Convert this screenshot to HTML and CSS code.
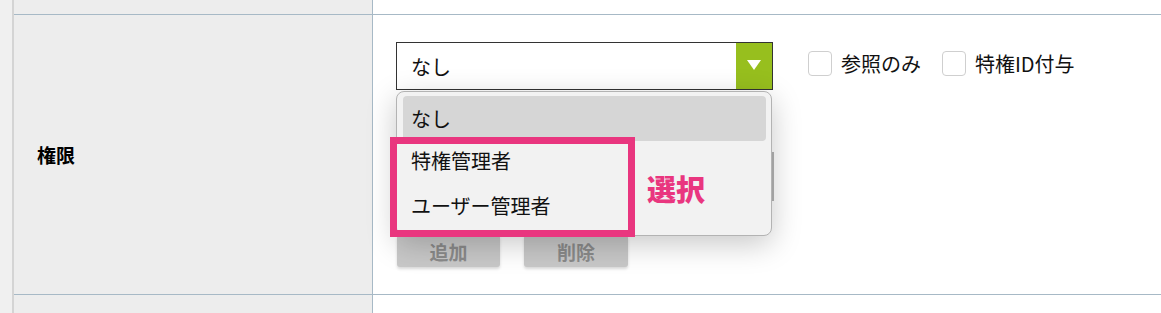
FILE: index.html
```html
<!DOCTYPE html>
<html lang="ja">
<head>
    <meta charset="UTF-8">
    <meta name="viewport" content="width=device-width, initial-scale=1.0">
    <title>権限設定</title>
    <link rel="stylesheet" href="styles.css">
</head>
<body>
    <div class="screen">
        <div class="gutter"></div>

        <div class="form-table">
            <div class="row row-top">
                <div class="label"></div>
                <div class="value"></div>
            </div>

            <!-- 権限 -->
            <div class="row row-main">
                <div class="label">権限</div>
                <div class="value">
                    <div class="controls">
                        <div class="select-wrap">
                            <div class="select">
                                <span class="select-text">なし</span>
                                <span class="select-arrow"></span>
                            </div>
                            <div class="member-list"></div>
                            <div class="buttons">
                                <button class="btn">追加</button>
                                <button class="btn btn-wide">削除</button>
                            </div>

                            <ul class="dropdown">
                                <li class="option option-active">なし</li>
                                <li class="option option-2">特権管理者</li>
                                <li class="option">ユーザー管理者</li>
                            </ul>
                            <div class="callout"></div>
                            <div class="callout-label">選択</div>
                        </div>

                        <div class="checks">
                            <label class="check"><span class="box"></span>参照のみ</label>
                            <label class="check"><span class="box"></span>特権ID付与</label>
                        </div>
                    </div>
                </div>
            </div>

            <div class="row row-bottom">
                <div class="label"></div>
                <div class="value"></div>
            </div>
        </div>
    </div>
</body>
</html>
```

FILE: styles.css
```css
* {
    margin: 0;
    padding: 0;
    box-sizing: border-box;
}

body {
    background-color: #fff;
    font-family: 'Noto Sans CJK JP', 'Noto Sans', sans-serif;
    color: #111;
    height: 313px;
    overflow: hidden;
}

.screen {
    display: flex;
    height: 313px;
}

.gutter {
    width: 14px;
    background-color: #f0f0f0;
    border-right: 2px solid #d4d4d4;
}

.form-table {
    flex: 1;
}

/* 行 */
.row {
    display: grid;
    grid-template-columns: 359px 1fr;
    border-bottom: 1px solid #a7b9c6;
}

.row-top { height: 15px; }
.row-main { height: 280px; }
.row-bottom { height: 18px; border-bottom: none; }

.label {
    background-color: #ededed;
    border-right: 1px solid #a7b9c6;
}

.row-main .label {
    display: flex;
    align-items: center;
    padding-left: 23px;
    font-size: 19px;
    font-weight: bold;
    color: #000;
}

.value {
    background-color: #fff;
}

.row-main .value {
    padding: 27px 0 0 23px;
}

.controls {
    display: flex;
    align-items: flex-start;
}

/* セレクト */
.select-wrap {
    position: relative;
    width: 378px;
}

.select {
    display: flex;
    width: 377px;
    height: 48px;
    border: 1px solid #333;
    background-color: #fff;
}

.select-text {
    flex: 1;
    display: flex;
    align-items: center;
    padding-left: 14px;
    font-size: 20px;
}

.select-arrow {
    width: 36px;
    background-color: #97bf1e;
    display: flex;
    justify-content: center;
    align-items: center;
}

.select-arrow::after {
    content: "";
    border-left: 7px solid transparent;
    border-right: 7px solid transparent;
    border-top: 10px solid #fff;
    margin-top: -2px;
}

.member-list {
    margin-top: 62px;
    height: 49px;
    border-right: 3px solid #b4b4b4;
}

.buttons {
    display: flex;
    gap: 24px;
    margin-top: 34px;
    padding-left: 1px;
}

.btn {
    width: 103px;
    height: 32px;
    border: none;
    border-radius: 3px;
    background-color: #c8c8c8;
    color: #8a8a8a;
    font-family: inherit;
    font-size: 19px;
    font-weight: bold;
    box-shadow: 0 2px 3px rgba(0, 0, 0, 0.15);
}

.btn-wide { width: 104px; }

/* ドロップダウン */
.dropdown {
    position: absolute;
    top: 49px;
    left: 0;
    width: 376px;
    height: 145px;
    list-style: none;
    padding: 4px 5px 0 6px;
    background-color: #f2f2f2;
    border: 1px solid #b3b3b3;
    border-radius: 8px;
    box-shadow: 0 8px 30px rgba(0, 0, 0, 0.22);
    z-index: 5;
}

.option {
    height: 45px;
    line-height: 45px;
    padding-left: 8px;
    font-size: 20px;
    color: #111;
}

.option-active {
    background-color: #d6d6d6;
    border-radius: 4px;
}

.option-2 {
    height: 42px;
    line-height: 40px;
}

/* 注釈 */
.callout {
    position: absolute;
    top: 95px;
    left: -6px;
    width: 245px;
    height: 100px;
    border: 7px solid #e9367f;
    z-index: 6;
}

.callout-label {
    position: absolute;
    top: 132px;
    left: 251px;
    font-size: 29px;
    line-height: 29px;
    font-weight: 900;
    color: #e9367f;
    z-index: 6;
}

/* チェックボックス */
.checks {
    display: flex;
    align-items: center;
    height: 42px;
    margin-left: 34px;
    gap: 21px;
}

.check {
    display: flex;
    align-items: center;
    gap: 9px;
    font-size: 20px;
    color: #111;
}

.box {
    width: 24px;
    height: 25px;
    border: 1px solid #cfcfcf;
    border-radius: 4px;
    background-color: #fff;
}
```
